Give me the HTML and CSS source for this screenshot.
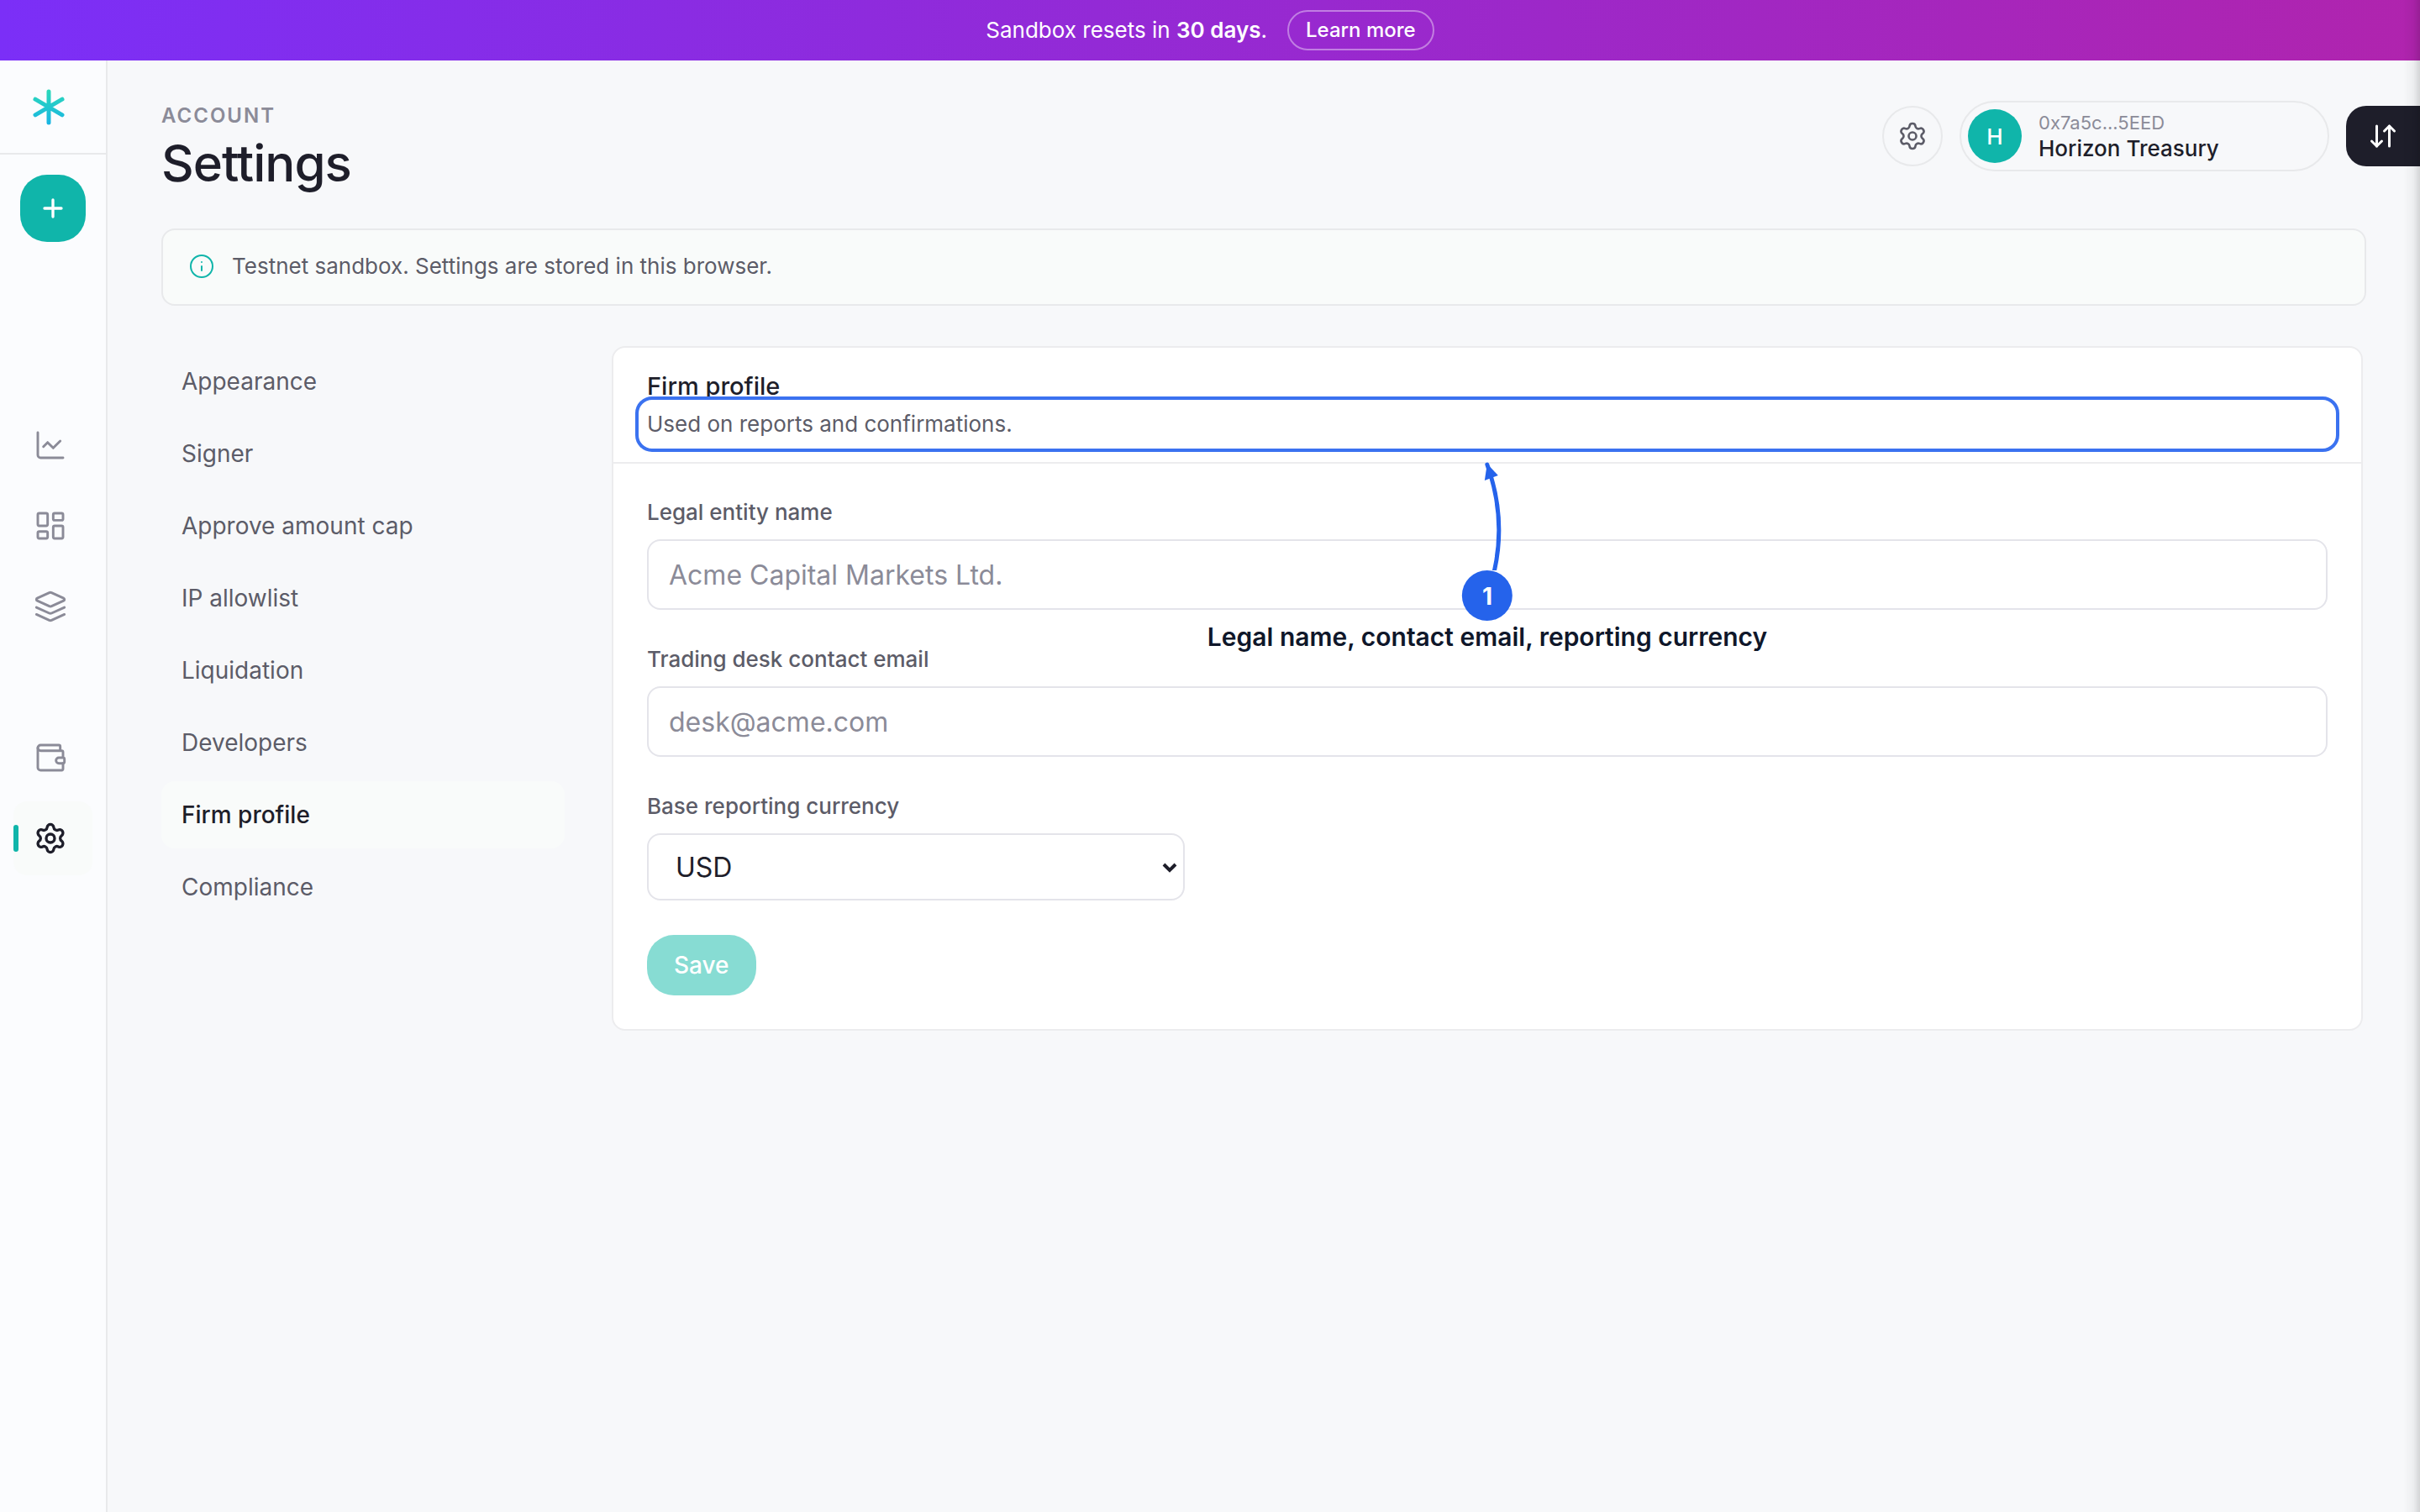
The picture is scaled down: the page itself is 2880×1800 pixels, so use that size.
FILE: index.html
```html
<!DOCTYPE html>
<html lang="en">
<head>
    <meta charset="UTF-8">
    <meta name="viewport" content="width=device-width, initial-scale=1.0">
    <title>Settings</title>
    <link rel="stylesheet" href="styles.css">
</head>
<body>
    <div class="banner">
        <span>Sandbox resets in <strong>30 days</strong>.</span>
        <button type="button" class="banner-button">Learn more</button>
    </div>

    <div class="layout">
        <aside class="sidebar">
            <a href="#" class="logo" aria-label="Home">
                <svg width="48" height="48" viewBox="0 0 48 48" fill="none" stroke="url(#logoGradient)" stroke-width="5" stroke-linecap="round">
                    <defs>
                        <linearGradient id="logoGradient" gradientUnits="userSpaceOnUse" x1="0" y1="3" x2="0" y2="45">
                            <stop offset="0" stop-color="#2ddab8"/>
                            <stop offset="1" stop-color="#18b4e4"/>
                        </linearGradient>
                    </defs>
                    <path d="M24 6V43M8 15.200L40 33.800M40 15.200L8 33.800"/>
                </svg>
            </a>
            <button type="button" class="add-button" aria-label="New">
                <svg class="icon" viewBox="0 0 24 24"><path d="M6 12h12M12 6v12"/></svg>
            </button>

            <nav class="side-nav">
                <a href="#" class="side-link" aria-label="Markets">
                    <svg class="icon" viewBox="0 0 24 24"><path d="M3 3v16a2 2 0 0 0 2 2h16"/><path d="m7 13 3-3 4 4 5-5"/></svg>
                </a>
                <a href="#" class="side-link" aria-label="Dashboard">
                    <svg class="icon" viewBox="0 0 24 24"><rect width="7" height="9" x="3" y="3" rx="1"/><rect width="7" height="5" x="14" y="3" rx="1"/><rect width="7" height="9" x="14" y="12" rx="1"/><rect width="7" height="5" x="3" y="16" rx="1"/></svg>
                </a>
                <a href="#" class="side-link" aria-label="Positions">
                    <svg class="icon" viewBox="0 0 24 24"><path d="m12.830 2.180a2 2 0 0 0-1.660 0L2.600 6.080a1 1 0 0 0 0 1.830l8.580 3.910a2 2 0 0 0 1.660 0l8.580-3.900a1 1 0 0 0 0-1.830Z"/><path d="m22 12.650-9.170 4.160a2 2 0 0 1-1.660 0L2 12.650"/><path d="m22 17.650-9.170 4.160a2 2 0 0 1-1.660 0L2 17.650"/></svg>
                </a>
            </nav>
            <nav class="side-nav side-nav-account">
                <a href="#" class="side-link" aria-label="Wallet">
                    <svg class="icon" viewBox="0 0 24 24"><path d="M19 7V4a1 1 0 0 0-1-1H5a2 2 0 0 0 0 4h15a1 1 0 0 1 1 1v4h-3a2 2 0 0 0 0 4h3a1 1 0 0 0 1-1v-2a1 1 0 0 0-1-1"/><path d="M3 5v14a2 2 0 0 0 2 2h15a1 1 0 0 0 1-1v-4"/></svg>
                </a>
                <a href="#" class="side-link active" aria-label="Settings">
                    <svg class="icon" viewBox="0 0 24 24"><path d="M9.671 4.136a2.340 2.340 0 0 1 4.659 0 2.340 2.340 0 0 0 3.319 1.915 2.340 2.340 0 0 1 2.330 4.033 2.340 2.340 0 0 0 0 3.831 2.340 2.340 0 0 1-2.330 4.033 2.340 2.340 0 0 0-3.319 1.915 2.340 2.340 0 0 1-4.659 0 2.340 2.340 0 0 0-3.320-1.915 2.340 2.340 0 0 1-2.330-4.033 2.340 2.340 0 0 0 0-3.831A2.340 2.340 0 0 1 6.350 6.051a2.340 2.340 0 0 0 3.319-1.915"/><circle cx="12" cy="12" r="3"/></svg>
                </a>
            </nav>
        </aside>

        <main class="content">
            <header class="page-header">
                <div class="page-title">
                    <p class="eyebrow">ACCOUNT</p>
                    <h1>Settings</h1>
                </div>
                <div class="header-actions">
                    <button type="button" class="round-button" aria-label="Preferences">
                        <svg class="icon" viewBox="0 0 24 24"><path d="M9.671 4.136a2.340 2.340 0 0 1 4.659 0 2.340 2.340 0 0 0 3.319 1.915 2.340 2.340 0 0 1 2.330 4.033 2.340 2.340 0 0 0 0 3.831 2.340 2.340 0 0 1-2.330 4.033 2.340 2.340 0 0 0-3.319 1.915 2.340 2.340 0 0 1-4.659 0 2.340 2.340 0 0 0-3.320-1.915 2.340 2.340 0 0 1-2.330-4.033 2.340 2.340 0 0 0 0-3.831A2.340 2.340 0 0 1 6.350 6.051a2.340 2.340 0 0 0 3.319-1.915"/><circle cx="12" cy="12" r="3"/></svg>
                    </button>
                    <button type="button" class="account">
                        <span class="avatar">H</span>
                        <span class="account-text">
                            <span class="account-address">0x7a5c...5EED</span>
                            <span class="account-name">Horizon Treasury</span>
                        </span>
                    </button>
                    <button type="button" class="trade-tab" aria-label="Open trade panel">
                        <svg class="icon" viewBox="0 0 24 24"><path d="m3 16 4 4 4-4"/><path d="M7 20V4"/><path d="m21 8-4-4-4 4"/><path d="M17 4v16"/></svg>
                    </button>
                </div>
            </header>

            <div class="notice">
                <svg class="icon" viewBox="0 0 28 28"><circle cx="14" cy="14" r="13"/><path d="M14 14v5M14 9v0.010"/></svg>
                <span>Testnet sandbox. Settings are stored in this browser.</span>
            </div>

            <div class="settings">
                <nav class="settings-nav">
                    <a href="#">Appearance</a>
                    <a href="#">Signer</a>
                    <a href="#">Approve amount cap</a>
                    <a href="#">IP allowlist</a>
                    <a href="#">Liquidation</a>
                    <a href="#">Developers</a>
                    <a href="#" class="active">Firm profile</a>
                    <a href="#">Compliance</a>
                </nav>

                <section class="card">
                    <div class="card-header">
                        <h2>Firm profile</h2>
                        <div class="card-description">
                            <p>Used on reports and confirmations.</p>
                            <!-- tour step: ring round the description, arrow and caption below it -->
                            <div class="tour-ring"></div>
                            <div class="tour-step">
                                <svg class="tour-arrow" width="60" height="140" viewBox="0 0 60 140">
                                    <path d="M30 14Q58 92 30 170" fill="none" stroke="#2563eb" stroke-width="5" stroke-linecap="round"/>
                                    <path d="M30 13L43 27L27 33Z" fill="#2563eb"/>
                                </svg>
                                <span class="tour-number">1</span>
                                <span class="tour-caption">Legal name, contact email, reporting currency</span>
                            </div>
                        </div>
                    </div>
                    <form class="card-body">
                        <div class="field">
                            <label for="legal-name">Legal entity name</label>
                            <input type="text" id="legal-name" placeholder="Acme Capital Markets Ltd.">
                        </div>
                        <div class="field">
                            <label for="desk-email">Trading desk contact email</label>
                            <input type="email" id="desk-email" placeholder="desk@acme.com">
                        </div>
                        <div class="field">
                            <label for="currency">Base reporting currency</label>
                            <div class="select-wrap">
                                <select id="currency">
                                    <option>USD</option>
                                </select>
                                <svg class="select-arrow" width="20" height="14" viewBox="0 0 20 14"><path d="M3 3l7 7 7-7"/></svg>
                            </div>
                        </div>
                        <button type="submit" class="save-button" disabled>Save</button>
                    </form>
                </section>
            </div>
        </main>
    </div>
    <div class="drawer-shadow"></div>
</body>
</html>
```
FILE: styles.css
```css
* {
    box-sizing: border-box;
}

body {
    margin: 0;
    min-height: 100vh;
    display: flex;
    flex-direction: column;
    font-family: Inter, "Noto Sans", sans-serif;
    font-size: 26px;
    line-height: 36px;
    color: #1e1e2a;
    background-color: #f7f8fa;
}

button,
input,
select {
    font-family: inherit;
}

button {
    border: none;
    padding: 0;
    cursor: pointer;
}

a {
    color: inherit;
    text-decoration: none;
}

h1,
h2,
p {
    margin: 0;
    font-weight: 500;
}

.icon {
    display: block;
    width: 40px;
    height: 40px;
    fill: none;
    stroke: currentColor;
    stroke-width: 1.75;
    stroke-linecap: round;
    stroke-linejoin: round;
}

/* top banner */
.banner {
    display: flex;
    align-items: center;
    justify-content: center;
    gap: 24px;
    height: 72px;
    padding-bottom: 1px;
    color: #fff;
    background: linear-gradient(90deg, #7b2ff7, #b024ae);
}

.banner strong {
    font-weight: 600;
}

.banner-button {
    height: 48px;
    padding: 0 20px;
    border: 2px solid rgba(255, 255, 255, 0.4);
    border-radius: 24px;
    background: none;
    color: #fff;
    font-size: 24px;
    font-weight: 500;
}

/* sidebar */
.layout {
    display: flex;
    flex: 1;
}

.sidebar {
    width: 128px;
    flex-shrink: 0;
    border-right: 2px solid #e8e9eb;
    background-color: #fbfcfe;
}

.logo {
    display: flex;
    align-items: center;
    height: 112px;
    padding-left: 34px;
    border-bottom: 2px solid #e8e9eb;
}

.add-button {
    display: flex;
    align-items: center;
    justify-content: center;
    width: 78px;
    height: 80px;
    margin: 24px 24px 0;
    border-radius: 32px;
    color: #fff;
    background-color: #10b5aa;
}

.add-button .icon {
    stroke-width: 2;
}

.side-nav {
    display: flex;
    flex-direction: column;
    gap: 8px;
    margin-top: 198px;
    padding: 0 16px;
}

.side-nav-account {
    margin-top: 92px;
}

.side-link {
    display: flex;
    align-items: center;
    height: 88px;
    padding-left: 24px;
    border-radius: 16px;
    color: #8b8b98;
}

.side-link.active {
    position: relative;
    color: #1e1e2a;
    background-color: #f9fbfa;
}

.side-link.active .icon {
    stroke-width: 2;
}

.side-link.active::before {
    content: "";
    position: absolute;
    left: 0;
    top: 28px;
    width: 6px;
    height: 32px;
    border-radius: 3px;
    background-color: #10b5aa;
}

/* page header */
.content {
    flex: 1;
    min-width: 0;
    padding: 48px 64px 0;
}

.page-header {
    display: flex;
    justify-content: space-between;
    margin-right: -64px;
}

.eyebrow {
    font-size: 24px;
    line-height: 36px;
    font-weight: 600;
    letter-spacing: 2px;
    color: #8b8b98;
}

h1 {
    font-size: 60px;
    line-height: 76px;
    letter-spacing: -1px;
}

.header-actions {
    display: flex;
    align-items: center;
    gap: 20px;
    height: 84px;
}

.round-button {
    display: flex;
    align-items: center;
    justify-content: center;
    width: 72px;
    height: 72px;
    border: 2px solid #e8e9eb;
    border-radius: 50%;
    color: #5c5c68;
    background: none;
}

.round-button .icon {
    width: 36px;
    height: 36px;
}

.account {
    display: flex;
    align-items: center;
    gap: 20px;
    width: 440px;
    height: 84px;
    padding: 0 8px;
    border: 2px solid #e8e9eb;
    border-radius: 42px;
    background: none;
    text-align: left;
}

.avatar {
    display: flex;
    align-items: center;
    justify-content: center;
    width: 64px;
    height: 64px;
    border-radius: 50%;
    color: #fff;
    background-color: #10b5aa;
    font-size: 26px;
    font-weight: 500;
}

.account-text {
    display: flex;
    flex-direction: column;
}

.account-address {
    font-size: 22px;
    line-height: 30px;
    color: #8b8b98;
}

.account-name {
    font-size: 26px;
    line-height: 32px;
    font-weight: 500;
    color: #1e1e2a;
}

.trade-tab {
    display: flex;
    align-items: center;
    justify-content: center;
    width: 88px;
    height: 72px;
    border-radius: 24px 0 0 24px;
    color: #fff;
    background-color: #1e1e2a;
}

.trade-tab .icon {
    width: 36px;
    height: 36px;
    stroke-width: 2;
}

/* notice */
.notice {
    display: flex;
    align-items: center;
    gap: 22px;
    height: 92px;
    margin-top: 40px;
    padding: 0 32px 2px;
    border: 2px solid #e8e9eb;
    border-radius: 16px;
    color: #5c5c68;
    background-color: #f9fbfa;
}

.notice .icon {
    width: 28px;
    height: 28px;
    stroke-width: 2;
    color: #10b5aa;
}

/* settings */
.settings {
    display: grid;
    grid-template-columns: 480px 1fr;
    gap: 56px;
    align-items: start;
    margin-top: 48px;
    padding-right: 4px;
}

.settings-nav {
    display: flex;
    flex-direction: column;
    gap: 6px;
    padding-top: 2px;
    font-size: 28px;
    color: #5c5c68;
}

.settings-nav a {
    display: flex;
    align-items: center;
    height: 80px;
    padding: 0 24px;
    border-radius: 16px;
}

.settings-nav .active {
    font-weight: 500;
    color: #1e1e2a;
    background-color: #f9fbfa;
}

.card {
    border: 2px solid #ececee;
    border-radius: 16px;
    background-color: #fff;
}

.card-header {
    padding: 26px 40px;
    border-bottom: 2px solid #ececee;
}

h2 {
    font-size: 29px;
    line-height: 40px;
}

.card-description {
    position: relative;
    padding: 7px 0 1px;
    color: #5c5c68;
}

.card-description p {
    font-weight: 400;
}

.tour-ring {
    position: absolute;
    top: -8px;
    bottom: -14px;
    left: -14px;
    right: -14px;
    border: 4px solid #3b72f0;
    border-radius: 20px;
}

.tour-step {
    position: absolute;
    top: 59px;
    left: 50%;
    display: flex;
    flex-direction: column;
    align-items: center;
    transform: translateX(-50%);
}

.tour-arrow {
    display: block;
}

.tour-number {
    display: flex;
    align-items: center;
    justify-content: center;
    width: 60px;
    height: 60px;
    padding-top: 2px;
    border-radius: 50%;
    color: #fff;
    background-color: #2563eb;
    font-size: 28px;
    font-weight: 700;
}

.tour-caption {
    white-space: nowrap;
    font-size: 30px;
    line-height: 38px;
    font-weight: 600;
    color: #0f172a;
}

.card-body {
    display: flex;
    flex-direction: column;
    align-items: flex-start;
    gap: 41px;
    padding: 40px;
}

.field {
    display: flex;
    flex-direction: column;
    gap: 14px;
    width: 100%;
}

.field label {
    font-weight: 500;
    color: #5c5c68;
}

.field input {
    width: 100%;
    height: 84px;
    padding: 0 24px;
    border: 2px solid #e4e4ea;
    border-radius: 16px;
    background-color: #fff;
    font-size: 32px;
    color: #1e1e2a;
}

.field input::placeholder {
    color: #8b8b98;
}

.select-wrap {
    position: relative;
    width: 640px;
}

.select-wrap select {
    display: block;
    width: 100%;
    height: 80px;
    padding: 0 32px;
    border: 2px solid #e4e4ea;
    border-radius: 16px;
    appearance: none;
    background-color: #fff;
    font-size: 32px;
    color: #1e1e2a;
}

.select-arrow {
    position: absolute;
    top: 34px;
    right: 8px;
    fill: none;
    stroke: #1e1e2a;
    stroke-width: 4;
    pointer-events: none;
}

.save-button {
    height: 72px;
    padding: 0 32px;
    border-radius: 32px;
    color: #fff;
    background-color: #87dcd3;
    font-size: 28px;
    font-weight: 500;
}

/* edge of the closed trade drawer */
.drawer-shadow {
    position: fixed;
    top: 0;
    bottom: 0;
    right: 0;
    width: 20px;
    background: linear-gradient(90deg, rgba(0, 0, 0, 0), rgba(0, 0, 0, 0.04) 60%, rgba(0, 0, 0, 0.14));
    pointer-events: none;
}
```
